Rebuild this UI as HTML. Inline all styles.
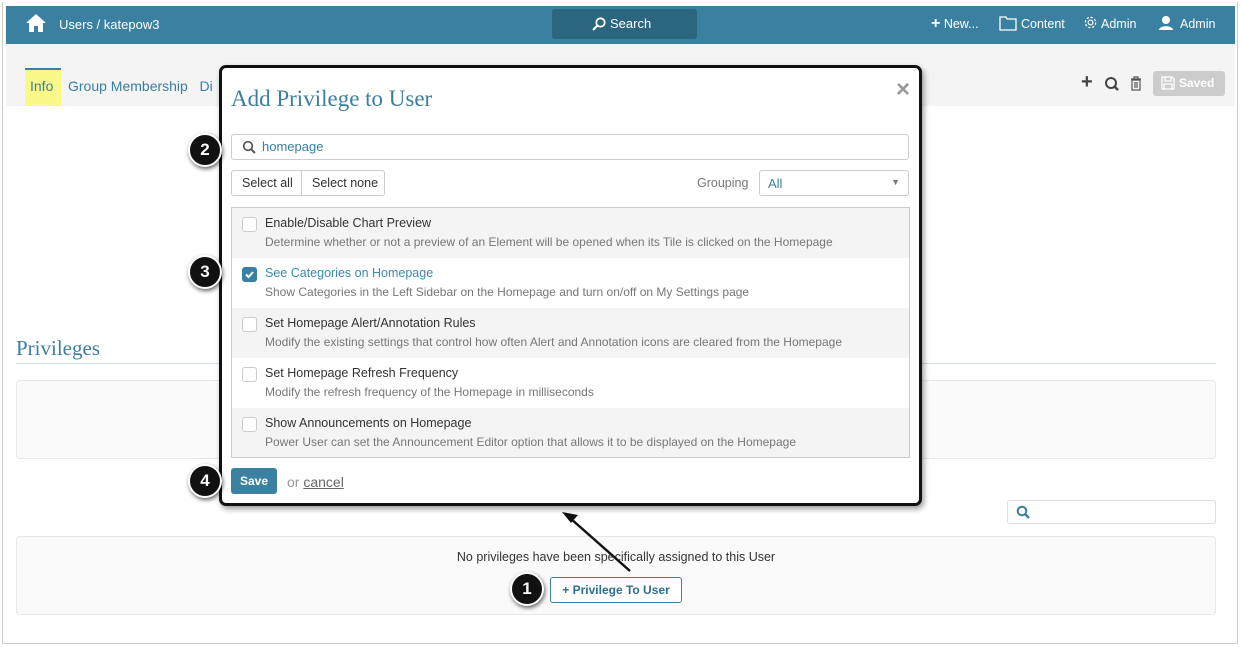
<!DOCTYPE html>
<html><head><meta charset="utf-8"><style>
*{box-sizing:border-box;margin:0;padding:0}
body{width:1241px;height:647px;background:#fff;font-family:"Liberation Sans",sans-serif;position:relative;overflow:hidden;font-size:13px;color:#333}
.a{position:absolute}
.frame{left:2px;top:2px;width:1236px;height:642px;border:1px solid #ccc;border-top:none}
.hdr{left:6px;top:6px;width:1229px;height:38px;background:#3a81a1;color:#fff}
.tabs{left:6px;top:44px;width:1229px;height:62px;background:#f4f4f4}
.badge{width:34px;height:34px;border-radius:50%;background:#111;border:2px solid #fff;box-shadow:1px 2px 4px rgba(0,0,0,.6);color:#fff;font-weight:bold;font-size:17px;text-align:center;line-height:30px}
.row{position:absolute;left:0;width:677px;height:50px;padding:8px 0 0 33px}
.row .t{font-size:12.5px;color:#333}
.row .d{font-size:12px;color:#777;margin-top:5px}
.cb{position:absolute;left:10px;top:9px;width:15px;height:15px;border:1px solid #ccc;border-radius:3px;background:#fff}
.box{border:1px solid #e8e8e8;border-radius:4px;background:#fafafa}
</style></head><body>
<div class="a frame"></div>
<div class="a hdr">
 <svg class="a" style="left:19px;top:7px" width="22" height="20" viewBox="0 0 22 20"><path d="M11 1L1 10h3v9h5v-6h4v6h5v-9h3z" fill="#fff"/></svg>
 <div class="a" style="left:53px;top:11px;font-size:13px">Users / katepow3</div>
 <div class="a" style="left:546px;top:3px;width:145px;height:30px;background:#2b6580;border-radius:3px;font-size:13px;line-height:30px">
  <svg class="a" style="left:40px;top:8px" width="14" height="14" viewBox="0 0 14 14"><circle cx="8.5" cy="5.5" r="4.2" stroke="#fff" stroke-width="1.8" fill="none"/><path d="M5.5 8.5L1 13" stroke="#fff" stroke-width="2"/></svg><span class="a" style="left:58px;top:0">Search</span></div>
 <div class="a" style="left:925px;top:11px;font-size:12.5px"><b style="font-size:16px;line-height:12px">+</b> New...</div>
 <svg class="a" style="left:993px;top:10px" width="18" height="15" viewBox="0 0 18 15"><path d="M1 1h6l1 2h9v11H1z" fill="none" stroke="#fff" stroke-width="1.3"/></svg>
 <div class="a" style="left:1015px;top:11px;font-size:12.5px">Content</div>
 <svg class="a" style="left:1077px;top:9px" width="15" height="15" viewBox="0 0 16 16"><circle cx="8" cy="8" r="2.5" stroke="#fff" fill="none" stroke-width="1.3"/><circle cx="8" cy="8" r="5.5" stroke="#fff" fill="none" stroke-width="1.3" stroke-dasharray="2.5 1.8"/></svg>
 <div class="a" style="left:1095px;top:11px;font-size:12.5px">Admin</div>
 <svg class="a" style="left:1152px;top:9px" width="16" height="16" viewBox="0 0 16 16"><circle cx="8" cy="5" r="4" fill="#fff"/><path d="M1 15c0-5 14-5 14 0z" fill="#fff"/></svg>
 <div class="a" style="left:1174px;top:11px;font-size:12.5px">Admin</div>
</div>
<div class="a tabs">
 <div class="a" style="left:19px;top:24px;width:36px;height:38px;background:#fbf88a;border-top:2px solid #3a81a1;font-size:14px;color:#3a7fa0;padding:8px 0 0 5px">Info</div>
 <div class="a" style="left:62px;top:34px;font-size:14px;color:#3a7fa0">Group Membership&nbsp;&nbsp; Di</div>
 <div class="a" style="left:1075px;top:28px;font-size:20px;font-weight:bold;color:#444;line-height:20px">+</div>
 <svg class="a" style="left:1098px;top:32px" width="16" height="16" viewBox="0 0 16 16"><circle cx="7" cy="7" r="5" stroke="#444" stroke-width="2" fill="none"/><path d="M10.5 10.5L14 14" stroke="#444" stroke-width="2.5"/></svg>
 <svg class="a" style="left:1124px;top:32px" width="12" height="15" viewBox="0 0 12 15"><path d="M1 3h10M4 3V1h4v2M2 4h8v10H2z M5 6v6M7 6v6" stroke="#555" fill="none" stroke-width="1.2"/></svg>
 <div class="a" style="left:1147px;top:27px;width:72px;height:25px;background:#ccc;border-radius:3px;color:#fff;font-weight:bold;font-size:12px;line-height:25px;padding-left:26px">Saved
  <svg class="a" style="left:8px;top:5px" width="14" height="14" viewBox="0 0 14 14"><path d="M1 1h10l2 2v10H1z M4 1v4h6V1 M3 8h8v5H3z" stroke="#fff" fill="none" stroke-width="1.3"/></svg></div>
</div>
<div class="a" style="left:16px;top:336px;font-family:'Liberation Serif',serif;font-size:21px;color:#3a7fa0">Privileges</div>
<div class="a" style="left:16px;top:363px;width:1200px;height:1px;background:#cfe0ea"></div>
<div class="a box" style="left:16px;top:380px;width:1200px;height:79px"></div>
<div class="a" style="left:1007px;top:500px;width:209px;height:24px;border:1px solid #ddd;border-radius:3px"></div>
<svg class="a" style="left:1016px;top:505px" width="14" height="14" viewBox="0 0 14 14"><circle cx="6" cy="6" r="4.3" stroke="#3a7fa0" stroke-width="2" fill="none"/><path d="M9 9L13 13" stroke="#3a7fa0" stroke-width="2.4"/></svg>
<div class="a box" style="left:16px;top:536px;width:1200px;height:79px"></div>
<div class="a" style="left:0;width:1232px;top:550px;text-align:center;font-size:12.5px">No privileges have been specifically assigned to this User</div>
<div class="a" style="left:550px;top:577px;width:132px;height:26px;border:1px solid #3a81a1;border-radius:3px;background:#fff;color:#2d6e8e;font-weight:bold;font-size:12px;line-height:24px;text-align:center">+ Privilege To User</div>

<div class="a" style="left:219px;top:65px;width:703px;height:441px;border:3px solid #111;border-radius:7px;background:#fff;box-shadow:2px 3px 6px rgba(0,0,0,.4)">
 <div class="a" style="left:9px;top:18px;font-family:'Liberation Serif',serif;font-size:23px;color:#3a7fa0">Add Privilege to User</div>
 <div class="a" style="left:674px;top:8px;font-size:24px;color:#999;font-weight:bold">×</div>
 <div class="a" style="left:9px;top:66px;width:678px;height:26px;border:1px solid #ccc;border-radius:3px;padding:4px 0 0 30px;color:#3a7fa0;font-size:13px">homepage
  <svg class="a" style="left:10px;top:5px" width="14" height="14" viewBox="0 0 14 14"><circle cx="6" cy="6" r="4.3" stroke="#555" stroke-width="1.7" fill="none"/><path d="M9 9L13 13" stroke="#555" stroke-width="2"/></svg></div>
 <div class="a" style="left:9px;top:102px;width:154px;height:26px;border:1px solid #ccc;border-radius:3px;font-size:12.5px;line-height:24px">
  <span class="a" style="left:10px">Select all</span><span class="a" style="left:69px;top:0;height:24px;border-left:1px solid #ccc"></span><span class="a" style="left:80px">Select none</span></div>
 <div class="a" style="left:475px;top:108px;color:#777;font-size:12.5px">Grouping</div>
 <div class="a" style="left:537px;top:102px;width:150px;height:26px;border:1px solid #ccc;border-radius:3px;color:#3a7fa0;font-size:13px;padding:5px 0 0 8px">All<span class="a" style="right:8px;top:6px;color:#777;font-size:9px">▼</span></div>
 <div class="a" style="left:9px;top:139px;width:679px;height:251px;border:1px solid #ccc;overflow:hidden">
  <div class="row" style="top:0;background:#f4f4f4"><div class="cb"></div><div class="t">Enable/Disable Chart Preview</div><div class="d">Determine whether or not a preview of an Element will be opened when its Tile is clicked on the Homepage</div></div>
  <div class="row" style="top:50px;background:#fff"><div class="cb" style="background:#3a81a1;border-color:#3a81a1"><svg width="13" height="13" viewBox="0 0 13 13" style="position:absolute;left:0;top:0"><path d="M3 6.5l2.5 2.5L10 4" stroke="#fff" stroke-width="2" fill="none"/></svg></div><div class="t" style="color:#3a8bb0">See Categories on Homepage</div><div class="d">Show Categories in the Left Sidebar on the Homepage and turn on/off on My Settings page</div></div>
  <div class="row" style="top:100px;background:#f4f4f4"><div class="cb"></div><div class="t">Set Homepage Alert/Annotation Rules</div><div class="d">Modify the existing settings that control how often Alert and Annotation icons are cleared from the Homepage</div></div>
  <div class="row" style="top:150px;background:#fff"><div class="cb"></div><div class="t">Set Homepage Refresh Frequency</div><div class="d">Modify the refresh frequency of the Homepage in milliseconds</div></div>
  <div class="row" style="top:200px;background:#f4f4f4"><div class="cb"></div><div class="t">Show Announcements on Homepage</div><div class="d">Power User can set the Announcement Editor option that allows it to be displayed on the Homepage</div></div>
 </div>
 <div class="a" style="left:9px;top:400px;width:46px;height:26px;background:#3a81a1;border-radius:3px;color:#fff;font-weight:bold;font-size:12px;line-height:26px;text-align:center">Save</div>
 <div class="a" style="left:65px;top:406px;font-size:14px;color:#999">or <span style="text-decoration:underline;color:#666">cancel</span></div>
</div>

<svg class="a" style="left:0;top:0" width="1241" height="647"><path d="M630 571L570 518" stroke="#111" stroke-width="2.5"/><path d="M562 512l16 3-7 8z" fill="#111"/></svg>
<div class="a badge" style="left:188px;top:133px">2</div>
<div class="a badge" style="left:188px;top:255px">3</div>
<div class="a badge" style="left:188px;top:464px">4</div>
<div class="a badge" style="left:510px;top:572px">1</div>
</body></html>
